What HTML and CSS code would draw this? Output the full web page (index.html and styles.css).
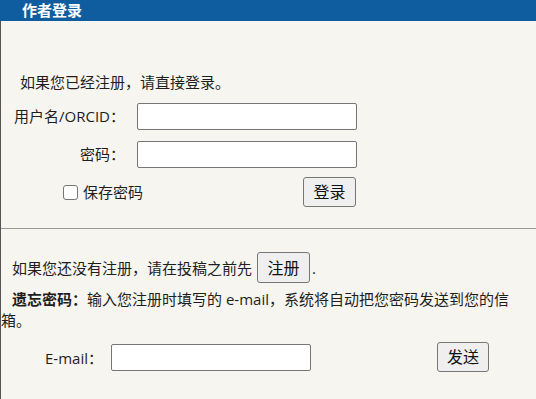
FILE: index.html
```html
<!DOCTYPE html>
<html lang="zh-CN">
<head>
<meta charset="utf-8">
<title>作者登录</title>
<link rel="stylesheet" href="styles.css">
</head>
<body>
<div class="header">作者登录</div>
<div class="panel">
  <p class="intro">如果您已经注册，请直接登录。</p>
  <div class="login-grid">
    <label class="lbl">用户名/ORCID：</label>
    <input class="field" type="text">
    <label class="lbl">密码：</label>
    <input class="field" type="password">
    <div class="row3">
      <label class="remember"><span class="box"></span>保存密码</label>
      <button class="btn btn-login">登录</button>
    </div>
  </div>
  <hr class="sep">
  <div class="reg-line">如果您还没有注册，请在投稿之前先<button class="btn btn-reg">注册</button>.</div>
  <p class="forgot"><b>遗忘密码：</b>输入您注册时填写的 e-mail，系统将自动把您密码发送到您的信箱。</p>
  <div class="mail-row">
    <label class="mail-lbl">E-mail：</label>
    <input class="mail-field" type="text">
    <button class="btn btn-send">发送</button>
  </div>
</div>
</body>
</html>
```
FILE: styles.css
```css
html, body {
  margin: 0;
  padding: 0;
  background: #f6f5ef;
  font-family: "Open Sans", "Noto Sans CJK SC", sans-serif;
  font-size: 15px;
  color: #1e1e1e;
  height: 100%;
}
.header {
  height: 21px;
  line-height: 20px;
  background: #0f5c9e;
  color: #fff;
  font-weight: bold;
  font-size: 15px;
  padding-left: 22px;
}
.panel {
  border-left: 1px solid #555;
  min-height: 378px;
  box-sizing: border-box;
}
.intro {
  margin: 0;
  padding: 51px 0 0 19px;
  line-height: 20px;
}
.login-grid {
  display: grid;
  grid-template-columns: 124px 220px;
  column-gap: 12px;
  row-gap: 11px;
  width: 356px;
  margin-top: 11px;
}
.lbl {
  text-align: right;
  line-height: 27px;
  height: 27px;
  white-space: nowrap;
}
.field, .mail-field {
  height: 27px;
  box-sizing: border-box;
  border: 1px solid #767676;
  border-radius: 2px;
  background: #fff;
  margin: 0;
  padding: 0 4px;
  font: inherit;
}
.row3 {
  grid-column: 1 / -1;
  display: flex;
  justify-content: space-between;
  align-items: center;
  margin-top: -2px;
}
.remember {
  display: flex;
  align-items: center;
  padding-left: 62px;
  line-height: 20px;
}
.box {
  width: 15px;
  height: 15px;
  box-sizing: border-box;
  border: 1px solid #767676;
  border-radius: 3px;
  background: #fff;
  margin-right: 5px;
}
.btn {
  font-family: inherit;
  font-size: 16px;
  background: #efefef;
  border: 1px solid #767676;
  border-radius: 3px;
  color: #111;
  padding: 0;
  margin: 0;
  line-height: 20px;
}
.btn-login {
  width: 53px;
  height: 30px;
  margin-right: 1px;
}
.sep {
  border: 0;
  border-top: 1px solid #9a9a9a;
  margin: 21px 0 0 0;
  height: 0;
}
.reg-line {
  display: flex;
  align-items: center;
  padding-left: 11px;
  margin-top: 23px;
  line-height: 20px;
}
.btn-reg {
  width: 53px;
  height: 31px;
  margin: 0 2px 0 5px;
}
.forgot {
  margin: 6px 0 0 0;
  line-height: 21px;
  text-indent: 11px;
  width: 522px;
}
.mail-row {
  display: flex;
  align-items: center;
  margin-top: 11px;
}
.mail-lbl {
  padding-left: 44px;
  width: 66px;
  white-space: nowrap;
}
.mail-field {
  width: 200px;
}
.btn-send {
  width: 52px;
  height: 30px;
  margin-left: 126px;
}
```
